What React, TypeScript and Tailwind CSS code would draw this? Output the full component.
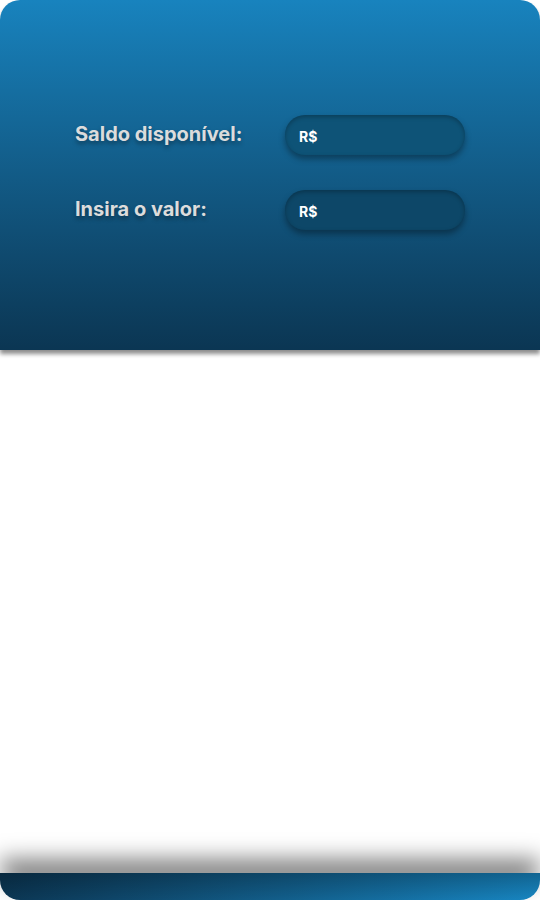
export default function App() {
  return (
    <div className="w-[540px] h-[900px] bg-white flex flex-col justify-between overflow-hidden" style={{ fontFamily: "Inter, 'Liberation Sans', sans-serif" }}>
      <div className="h-[350px] rounded-t-[20px] bg-gradient-to-b from-[#1883be] to-[#0b3653] shadow-[0_4px_4px_rgba(0,0,0,0.45)] relative z-10 pt-[115px] pl-[75px] flex flex-col gap-[35px]">
        <div className="flex items-center">
          <span className="w-[210px] text-[20px] font-bold text-[#dcdcdc] [text-shadow:0_3px_4px_rgba(0,0,0,0.35)] -mt-[2px]">Saldo disponível:</span>
          <div className="w-[180px] h-[40px] rounded-full bg-[#0e5377] shadow-[0_4px_6px_rgba(0,0,0,0.35),inset_0_2px_4px_rgba(0,0,0,0.25)] flex items-center pl-[14px] pt-[3px]">
            <span className="text-[14px] font-bold text-white">R$</span>
          </div>
        </div>
        <div className="flex items-center">
          <span className="w-[210px] text-[20px] font-bold text-[#dcdcdc] [text-shadow:0_3px_4px_rgba(0,0,0,0.35)] -mt-[2px]">Insira o valor:</span>
          <div className="w-[180px] h-[40px] rounded-full bg-[#0d4768] shadow-[0_4px_6px_rgba(0,0,0,0.35),inset_0_2px_4px_rgba(0,0,0,0.25)] flex items-center pl-[14px] pt-[3px]">
            <span className="text-[14px] font-bold text-white">R$</span>
          </div>
        </div>
      </div>
      <div className="h-[27px] rounded-b-[20px] bg-gradient-to-r from-[#0b3653] to-[#1786c2] shadow-[0_-14px_22px_rgba(0,0,0,0.5)] relative">
        <div className="absolute inset-0 rounded-b-[20px] bg-gradient-to-b from-[rgba(0,0,0,0.25)] to-transparent"></div>
      </div>
    </div>
  );
}
